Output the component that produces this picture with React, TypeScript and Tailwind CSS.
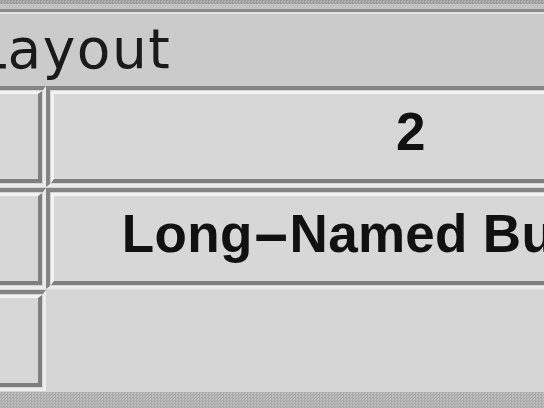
import React from "react";

const labels = ["Button 1", "2", "Button 3", "Long-Named Button 4", "Button 5"];

// the old X font draws "-" as a long dash
const Label = ({ text }: { text: string }) => {
  const parts = text.split("-");
  return (
    <span className="whitespace-nowrap">
      {parts.map((p, i) => (
        <React.Fragment key={i}>
          {i > 0 && (
            <span className="inline-block w-[37px] text-center scale-x-[2.2]">-</span>
          )}
          {p}
        </React.Fragment>
      ))}
    </span>
  );
};

const AwtButton = ({ text }: { text: string }) => {
  return (
    <div className="h-[101px] p-[1px] border-t-[4px] border-l-[4px] border-b-[3px] border-r-[3px] border-t-[#858585] border-l-[#858585] border-b-[#ececec] border-r-[#ececec]">
      <div className="h-full flex items-center justify-center pb-[9px] bg-[#d7d7d7] border-t-[3px] border-l-[3px] border-b-[4px] border-r-[4px] border-t-[#f3f3f3] border-l-[#f3f3f3] border-b-[#7f7f7f] border-r-[#7f7f7f] text-[53px] font-bold tracking-[0.3px] text-[#111]">
        <Label text={text} />
      </div>
    </div>
  );
};

const App = () => {
  return (
    <div className="w-[544px] h-[408px] overflow-hidden flex flex-col bg-[#d6d6d6] font-['Liberation_Sans',Arial,sans-serif]">
      {/* window frame top */}
      <div className="h-[4px] bg-[repeating-conic-gradient(#9a9a9a_0_25%,#b2b2b2_0_50%)] bg-[length:3px_3px]" />
      <div className="h-[5px] bg-[#c2c2c2]" />
      <div className="h-[3px] bg-[#8a8a8a]" />
      {/* title bar */}
      <div className="h-[74px] bg-[#cbcbcb] border-t-[2px] border-[#e2e2e2] pt-[8px] whitespace-nowrap">
        <div className="ml-[-146px] text-[55px] leading-none tracking-[1.5px] text-[#1a1a1a] font-['DejaVu_Sans',sans-serif]">
          GridLayout
        </div>
      </div>
      {/* buttons, GridLayout(0, 2) */}
      <div className="ml-[-684px] grid grid-cols-[730px_730px] gap-y-[1px]">
        {labels.map((l) => (
          <AwtButton key={l} text={l} />
        ))}
      </div>
      <div className="flex-1 mt-[1px] bg-[repeating-conic-gradient(#a9a9a9_0_25%,#c0c0c0_0_50%)] bg-[length:3px_3px]" />
    </div>
  );
};

export default App;
